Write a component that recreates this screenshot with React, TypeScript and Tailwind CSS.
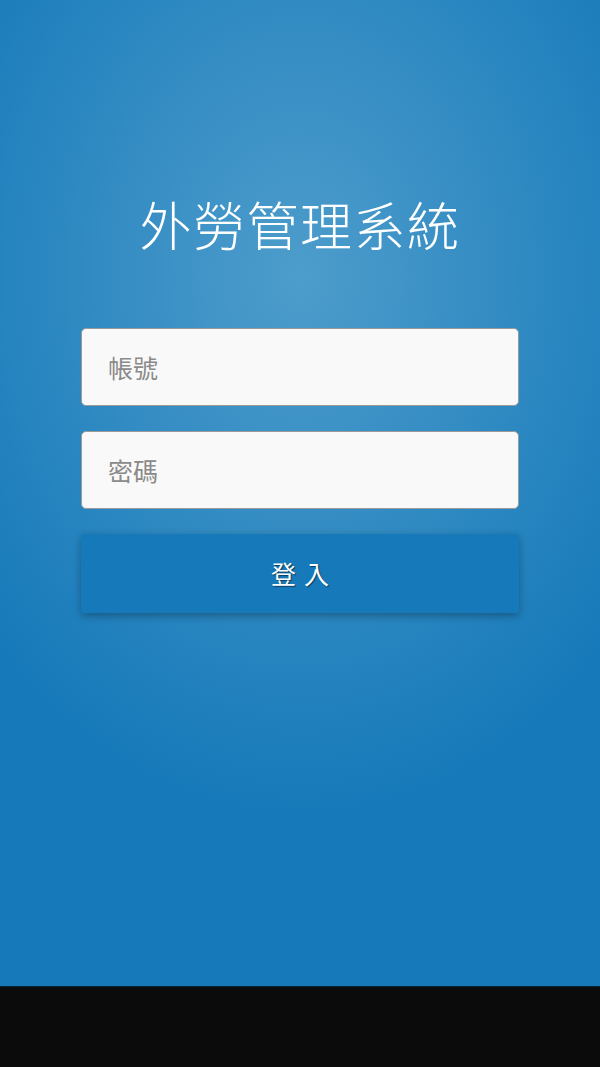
export default function App() {
  return (
    <div
      className="flex h-[1067px] w-[600px] flex-col overflow-hidden"
      style={{ fontFamily: '"Noto Sans CJK TC", "Noto Sans", sans-serif' }}
    >
      <div className="flex h-[986px] flex-col items-center bg-[radial-gradient(ellipse_70%_55%_at_50%_28%,#4d9dcb_0%,#3a90c5_35%,#2684bf_70%,#1679b9_100%)]">
        <h1 className="mt-[188px] text-[52px] font-light leading-[72px] tracking-[1.5px] text-white">
          外勞管理系統
        </h1>
        <div className="mt-[68px] flex w-[438px] flex-col gap-[25px]">
          <input
            placeholder="帳號"
            className="h-[78px] w-full rounded-[5px] border border-[#9a9a9a] bg-[#f9f9f9] px-[26px] text-[25px] text-[#444] outline-none placeholder:text-[#8a8a8a]"
          />
          <input
            type="text"
            placeholder="密碼"
            className="h-[78px] w-full rounded-[5px] border border-[#9a9a9a] bg-[#f9f9f9] px-[26px] text-[25px] text-[#444] outline-none placeholder:text-[#8a8a8a]"
          />
          <button className="flex h-[79px] w-full items-center justify-center rounded-[3px] bg-[#1679b9] text-[25px] tracking-[8px] text-white shadow-[0_3px_8px_rgba(0,0,0,0.3)] [text-shadow:1px_1px_1px_rgba(0,0,0,0.5)]">
            <span className="pl-[8px]">登入</span>
          </button>
        </div>
      </div>
      <div className="h-[81px] border-t border-[#06243a] bg-[#0b0b0b]" />
    </div>
  );
}
